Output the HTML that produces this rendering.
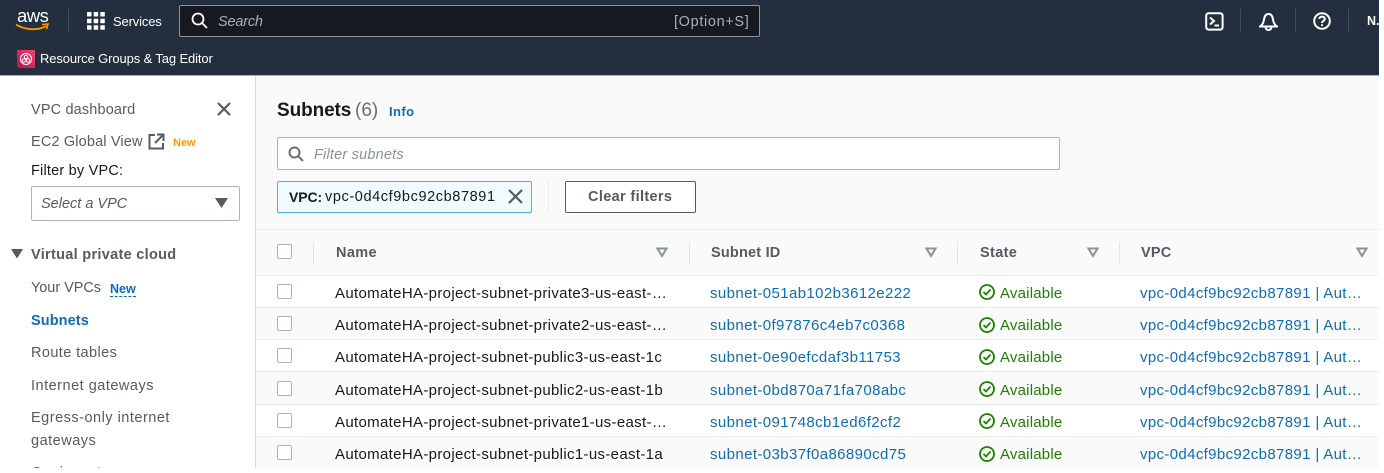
<!DOCTYPE html>
<html><head><meta charset="utf-8"><style>
html,body{margin:0;padding:0;background:#fff;width:1384px;height:473px;overflow:hidden}
#p{position:absolute;left:0;top:0;width:1379px;height:468px;overflow:hidden;background:#fafafa;font-family:"Liberation Sans",sans-serif;font-size:14.5px;color:#16191f;filter:blur(.35px)}
.a{position:absolute;white-space:nowrap}
.b{position:absolute}
.n{color:#545b64}
.l{color:#0f6cb5}
.g{color:#1d8102}
.t{left:335px;font-size:15px;letter-spacing:.33px}
.s{left:710px;font-size:15px;letter-spacing:.39px}
.v{left:1140px;font-size:15px;letter-spacing:.35px}
.av{left:1000px;font-size:15px;letter-spacing:.2px}
.cb{position:absolute;left:277px;width:13px;height:13px;border:1.5px solid #aab7b8;border-radius:2px;background:#fff}
.sep{position:absolute;width:1px;height:22px;top:242px;background:#e4e6e6}
.th{position:absolute;top:245px;font-weight:bold;color:#545b64;font-size:14.5px;letter-spacing:.2px;white-space:nowrap}
.row{position:absolute;left:256px;width:1123px;height:31px;border-bottom:1px solid #eaeded}
</style></head><body><div id="p">
<div class="b" style="left:0;top:0;width:1379px;height:76px;background:#232f3e;border-bottom:1px solid #aab0b5;box-sizing:border-box"></div>
<div class="a" style="left:17px;top:5px;color:#fff;font-size:18.5px;letter-spacing:-.5px">aws</div>
<svg class="b" style="left:15px;top:22px" width="37" height="11" viewBox="0 0 37 11"><path d="M1 2.5C10 8.5 24 8.5 31 4" fill="none" stroke="#f90" stroke-width="1.8"/><path d="M27 2.5L33 2L31.5 7" fill="none" stroke="#f90" stroke-width="1.6"/></svg>
<div class="b" style="left:68px;top:9px;width:1px;height:23px;background:#414d5c"></div>
<svg class="b" style="left:87px;top:12px" width="18" height="18" fill="#fff"><rect width="4.5" height="4.5" rx=".5"/><rect x="6.7" width="4.5" height="4.5" rx=".5"/><rect x="13.3" width="4.5" height="4.5" rx=".5"/><rect y="6.7" width="4.5" height="4.5" rx=".5"/><rect x="6.7" y="6.7" width="4.5" height="4.5" rx=".5"/><rect x="13.3" y="6.7" width="4.5" height="4.5" rx=".5"/><rect y="13.3" width="4.5" height="4.5" rx=".5"/><rect x="6.7" y="13.3" width="4.5" height="4.5" rx=".5"/><rect x="13.3" y="13.3" width="4.5" height="4.5" rx=".5"/></svg>
<div class="a" style="left:113px;top:14px;color:#fff;font-size:13px;letter-spacing:-.15px">Services</div>
<div class="b" style="left:179px;top:5px;width:581px;height:32px;box-sizing:border-box;background:#16191f;border:1px solid #8d9499;border-radius:2px"></div>
<svg class="b" style="left:191px;top:12px" width="17" height="17" fill="none" stroke="#fff" stroke-width="1.8"><circle cx="7" cy="7" r="5.5"/><path d="M11 11L16 16"/></svg>
<div class="a" style="left:218px;top:14px;color:#aab0b5;font-style:italic;font-size:14.5px;letter-spacing:-.2px">Search</div>
<div class="a" style="left:674px;top:14px;color:#aab0b5;font-size:14.5px;letter-spacing:.65px">[Option+S]</div>
<svg class="b" style="left:1205px;top:12px" width="19" height="19" fill="none" stroke="#fff" stroke-width="2"><rect x="1.2" y="1.2" width="16.4" height="16.4" rx="2.5"/><path d="M5 5.5L9 9L5 12.5M9.5 13.5H14"/></svg>
<div class="b" style="left:1240px;top:9px;width:1px;height:23px;background:#414d5c"></div>
<svg class="b" style="left:1259px;top:12px" width="19" height="19" fill="none" stroke="#fff" stroke-width="2"><path d="M1 14.5C4 12.5 4.5 10 5 7.5C5.5 4 7 2 9.5 2C12 2 13.5 4 14 7.5C14.5 10 15 12.5 18 14.5Z"/><path d="M6.5 15a3 3 0 0 0 6 0"/></svg>
<div class="b" style="left:1295px;top:8px;width:1px;height:25px;background:#414d5c"></div>
<svg class="b" style="left:1313px;top:12px" width="18" height="18" fill="none" stroke="#fff" stroke-width="2"><circle cx="9" cy="9" r="7.8"/><path d="M6.3 7C6.3 3.8 11.8 3.8 11.8 7C11.8 9 9 8.8 9 11"/><path d="M9 12.3V14"/></svg>
<div class="b" style="left:1348px;top:9px;width:1px;height:23px;background:#414d5c"></div>
<div class="a" style="left:1367px;top:14px;color:#fff;font-size:12.5px;font-weight:bold">N.</div>
<div class="b" style="left:17px;top:50px;width:18px;height:18px;background:linear-gradient(45deg,#bd0f4e,#f3466f)"></div>
<svg class="b" style="left:17px;top:50px" width="18" height="18" fill="none" stroke="#fff" stroke-width="1"><circle cx="9" cy="9" r="5.5"/><circle cx="9" cy="7" r="1.7"/><circle cx="7" cy="10.5" r="1.7"/><circle cx="11" cy="10.5" r="1.7"/></svg>
<div class="a" style="left:40px;top:51px;color:#fff;font-size:13px;letter-spacing:-.12px">Resource Groups &amp; Tag Editor</div>

<div class="b" style="left:0;top:76px;width:255px;height:392px;background:#fff;border-right:1px solid #d5dbdb"></div>
<div class="a n" style="left:31px;top:102px;font-size:14.5px;letter-spacing:.15px">VPC dashboard</div>
<svg class="b" style="left:216px;top:101px" width="16" height="16" fill="none" stroke="#545b64" stroke-width="2.2"><path d="M2 2L14 14M14 2L2 14"/></svg>
<div class="a n" style="left:31px;top:134px;letter-spacing:.15px">EC2 Global View</div>
<svg class="b" style="left:148px;top:133px" width="17" height="17" fill="none" stroke="#545b64" stroke-width="2"><path d="M7 2H1.5V15.5H15V10M9 1.5H15.5V8M15.5 1.5L7 10"/></svg>
<div class="a" style="left:173px;top:137px;color:#ff9900;font-size:11px;font-weight:bold">New</div>
<div class="a" style="left:31px;top:163px;letter-spacing:.2px">Filter by VPC:</div>
<div class="b" style="left:31px;top:186px;width:209px;height:35px;box-sizing:border-box;border:1.5px solid #aab7b8;border-radius:2px;background:#fff"></div>
<div class="a n" style="left:41px;top:196px;font-style:italic;letter-spacing:0">Select a VPC</div>
<svg class="b" style="left:215px;top:198px" width="13" height="11"><path d="M0 0H13L6.5 10Z" fill="#545b64"/></svg>
<svg class="b" style="left:11px;top:249px" width="12" height="10"><path d="M0 0H12L6 9.5Z" fill="#545b64"/></svg>
<div class="a" style="left:31px;top:247px;font-weight:bold;color:#545b64;letter-spacing:.3px">Virtual private cloud</div>
<div class="a n" style="left:31px;top:280px;letter-spacing:-.05px">Your VPCs</div>
<div class="a l" style="left:110px;top:283px;font-size:12.5px;font-weight:bold;border-bottom:1px dashed #0f6cb5;line-height:13px">New</div>
<div class="a" style="left:31px;top:313px;font-weight:bold;color:#0f6cb5;letter-spacing:.1px">Subnets</div>
<div class="a n" style="left:31px;top:345px;letter-spacing:.4px">Route tables</div>
<div class="a n" style="left:31px;top:378px;letter-spacing:.5px">Internet gateways</div>
<div class="a n" style="left:31px;top:410px;letter-spacing:.5px">Egress-only internet</div>
<div class="a n" style="left:31px;top:433px;letter-spacing:.5px">gateways</div>
<div class="a n" style="left:31px;top:465px;letter-spacing:.15px">Carrier gateways</div>

<div class="a" style="left:277px;top:100px;font-size:19px;font-weight:bold;letter-spacing:-.1px">Subnets</div>
<div class="a" style="left:355px;top:100px;font-size:19px;color:#687078">(6)</div>
<div class="a l" style="left:389px;top:104px;font-size:13px;font-weight:bold;letter-spacing:.4px">Info</div>
<div class="b" style="left:277px;top:137px;width:783px;height:33px;box-sizing:border-box;border:1.5px solid #aab7b8;border-radius:2px;background:#fff"></div>
<svg class="b" style="left:288px;top:146px" width="16" height="16" fill="none" stroke="#687078" stroke-width="2"><circle cx="6.5" cy="6.5" r="5"/><path d="M10.2 10.2L15 15"/></svg>
<div class="a" style="left:314px;top:147px;color:#879596;font-style:italic;letter-spacing:.2px">Filter subnets</div>
<div class="b" style="left:277px;top:181px;width:255px;height:32px;box-sizing:border-box;border:1.5px solid #44b9d6;border-radius:2px;background:#f1faff"></div>
<div class="a" style="left:289px;top:189px;font-size:14px;font-weight:bold;letter-spacing:-.1px">VPC:</div>
<div class="a" style="left:325px;top:189px;letter-spacing:.6px">vpc-0d4cf9bc92cb87891</div>
<svg class="b" style="left:508px;top:189px" width="15" height="15" fill="none" stroke="#545b64" stroke-width="2.2"><path d="M1 1L14 14M14 1L1 14"/></svg>
<div class="b" style="left:548px;top:181px;width:1px;height:32px;background:#eaeded"></div>
<div class="b" style="left:565px;top:181px;width:131px;height:32px;box-sizing:border-box;border:1.5px solid #545b64;border-radius:2px;background:#fff"></div>
<div class="a" style="left:588px;top:189px;font-weight:bold;color:#545b64;letter-spacing:.35px">Clear filters</div>

<div class="b" style="left:256px;top:229px;width:1123px;height:47px;box-sizing:border-box;background:#fafafa;border-top:1px solid #eaeded;border-bottom:1px solid #eaeded"></div>
<div class="cb" style="top:244px"></div>
<div class="sep" style="left:313px"></div>
<div class="th" style="left:336px;letter-spacing:.35px">Name</div>
<div class="sep" style="left:689px"></div>
<div class="th" style="left:711px">Subnet ID</div>
<div class="sep" style="left:957px"></div>
<div class="th" style="left:980px;letter-spacing:.35px">State</div>
<div class="sep" style="left:1119px"></div>
<div class="th" style="left:1141px">VPC</div>
<svg class="b" style="left:656px;top:247px" width="12" height="11" fill="none" stroke="#879596" stroke-width="2"><path d="M1.5 1.5H10.5L6 9Z"/></svg>
<svg class="b" style="left:925px;top:247px" width="12" height="11" fill="none" stroke="#879596" stroke-width="2"><path d="M1.5 1.5H10.5L6 9Z"/></svg>
<svg class="b" style="left:1087px;top:247px" width="12" height="11" fill="none" stroke="#879596" stroke-width="2"><path d="M1.5 1.5H10.5L6 9Z"/></svg>
<svg class="b" style="left:1356px;top:247px" width="12" height="11" fill="none" stroke="#879596" stroke-width="2"><path d="M1.5 1.5H10.5L6 9Z"/></svg>

<div class="row" style="top:276px;background:#fff"></div>
<div class="row" style="top:308px;background:#fafafa"></div>
<div class="row" style="top:340px;background:#fff"></div>
<div class="row" style="top:373px;background:#fafafa"></div>
<div class="row" style="top:405px;background:#fff"></div>
<div class="row" style="top:437px;background:#fafafa"></div>

<div class="cb" style="top:284px"></div><div class="a t" style="top:285px">AutomateHA-project-subnet-private3-us-east-…</div><div class="a l s" style="top:285px">subnet-051ab102b3612e222</div>
<div class="cb" style="top:316px"></div><div class="a t" style="top:317px">AutomateHA-project-subnet-private2-us-east-…</div><div class="a l s" style="top:317px">subnet-0f97876c4eb7c0368</div>
<div class="cb" style="top:348px"></div><div class="a t" style="top:349px">AutomateHA-project-subnet-public3-us-east-1c</div><div class="a l s" style="top:349px">subnet-0e90efcdaf3b11753</div>
<div class="cb" style="top:381px"></div><div class="a t" style="top:382px">AutomateHA-project-subnet-public2-us-east-1b</div><div class="a l s" style="top:382px">subnet-0bd870a71fa708abc</div>
<div class="cb" style="top:413px"></div><div class="a t" style="top:414px">AutomateHA-project-subnet-private1-us-east-…</div><div class="a l s" style="top:414px">subnet-091748cb1ed6f2cf2</div>
<div class="cb" style="top:445px"></div><div class="a t" style="top:446px">AutomateHA-project-subnet-public1-us-east-1a</div><div class="a l s" style="top:446px">subnet-03b37f0a86890cd75</div>

<svg width="0" height="0" style="position:absolute"><defs><g id="ok" fill="none" stroke="#1d8102" stroke-width="1.8"><circle cx="8" cy="8" r="7"/><path d="M4.5 8L7 10.5L11.5 5.5"/></g></defs></svg>
<svg class="b" style="left:979px;top:284px" width="16" height="16"><use href="#ok"/></svg><div class="a g av" style="top:285px">Available</div>
<svg class="b" style="left:979px;top:317px" width="16" height="16"><use href="#ok"/></svg><div class="a g av" style="top:317px">Available</div>
<svg class="b" style="left:979px;top:349px" width="16" height="16"><use href="#ok"/></svg><div class="a g av" style="top:349px">Available</div>
<svg class="b" style="left:979px;top:381px" width="16" height="16"><use href="#ok"/></svg><div class="a g av" style="top:382px">Available</div>
<svg class="b" style="left:979px;top:413px" width="16" height="16"><use href="#ok"/></svg><div class="a g av" style="top:414px">Available</div>
<svg class="b" style="left:979px;top:446px" width="16" height="16"><use href="#ok"/></svg><div class="a g av" style="top:446px">Available</div>

<div class="a l v" style="top:285px">vpc-0d4cf9bc92cb87891 | Aut…</div>
<div class="a l v" style="top:317px">vpc-0d4cf9bc92cb87891 | Aut…</div>
<div class="a l v" style="top:349px">vpc-0d4cf9bc92cb87891 | Aut…</div>
<div class="a l v" style="top:382px">vpc-0d4cf9bc92cb87891 | Aut…</div>
<div class="a l v" style="top:414px">vpc-0d4cf9bc92cb87891 | Aut…</div>
<div class="a l v" style="top:446px">vpc-0d4cf9bc92cb87891 | Aut…</div>
</div></body></html>
